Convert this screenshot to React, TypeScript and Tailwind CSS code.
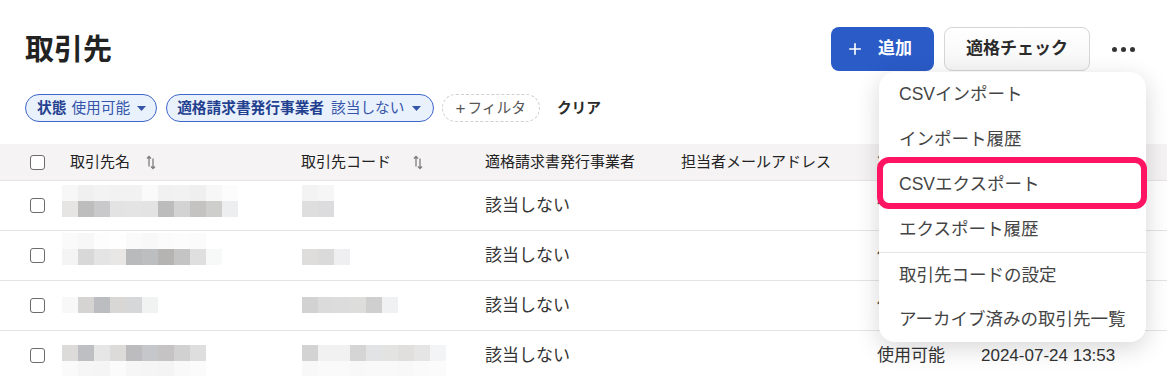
import { Plus } from 'lucide-react';

type Mosaic = { top: number; cells: string[][] };

const rows: { name: Mosaic; code: Mosaic }[] = [
  {
    name: {
      top: 4,
      cells: [
        ['#f7f7f7', '#f0f0f0', '#f3f3f3', '#f2f2f2', '#f2f2f2', '#fafafa', '#f1f1f1', '#f2f2f2', '#efefef', '#f7f7f7', '#fcfcfc'],
        ['#e6e5e4', '#bdbdbd', '#c9c9cb', '#e3e3e3', '#e4e4e4', '#e3e3e3', '#bcbcbc', '#d3d3d3', '#c4c3c2', '#cececd', '#eceef0'],
      ],
    },
    code: { top: 4, cells: [['#f3f3f3', '#f6f6f6'], ['#dedede', '#dcdcde']] },
  },
  {
    name: {
      top: 2,
      cells: [
        ['#fafafa', '#f7f7f7', '#fdfdfd', '#fefefe', '#fafafa', '#f8f8f8', '#fbfbfb', '#fcfcfc', '#fbfbfb'],
        ['#f4f4f4', '#d8d8d8', '#e4e4e4', '#e8e7e6', '#b9babc', '#bdbec0', '#b5b4b3', '#c4c4c4', '#dfdfe0', '#f7f8f8'],
      ],
    },
    code: { top: 18, cells: [['#dedddb', '#dadada', '#efeff1']] },
  },
  {
    name: { top: 16, cells: [['#f8f8f8', '#d5d4d2', '#bcbdc0', '#d8d7d6', '#d6d7d8', '#f1f2f2']] },
    code: { top: 16, cells: [['#d2d2d2', '#dbdbdb', '#dcdcdc', '#dddddc', '#cfcfcf', '#f0f1f3']] },
  },
  {
    name: {
      top: 14,
      cells: [
        ['#dcdbd9', '#bebfc2', '#e6e6e6', '#dcdbd9', '#bcbcbf', '#c6c7ca', '#c5c3c4', '#d0d1d0', '#dedede'],
        ['#fafafa', '#f6f6f6', '#f5f5f5', '#fbfbfb', '#f6f6f6', '#f5f5f5', '#f4f4f4', '#f9f9f9', '#fbfbfb'],
      ],
    },
    code: {
      top: 14,
      cells: [
        ['#d3d3d3', '#f1f1f1', '#f1f1f1', '#d5d5d5', '#e2e3e5', '#e3e3e2', '#e0dfde', '#e5e5e5', '#f3f4f6'],
        ['#f8f8f8', '#fafafa', '#fafafa', '#f8f8f8', '#f9f9f9', '#f9f9f9', '#f8f8f8', '#fafafa', '#fbfbfb'],
      ],
    },
  },
];

const menuItems = ['CSVインポート', 'インポート履歴', 'CSVエクスポート', 'エクスポート履歴'];

function Blur({ m }: { m: Mosaic }) {
  return (
    <div className="flex flex-col" style={{ marginTop: m.top }}>
      {m.cells.map((line, i) => (
        <div key={i} className="flex">
          {line.map((c, j) => (
            <div key={j} className="w-4 h-4" style={{ backgroundColor: c }} />
          ))}
        </div>
      ))}
    </div>
  );
}

function Checkbox() {
  return <div className="w-[15px] h-[15px] rounded-[3px] border-[1.5px] border-[#6b6b6b] bg-white" />;
}

function SortIcon() {
  return (
    <svg width="10" height="15" viewBox="0 0 10 15" className="text-[#7d7d7d]" fill="none" stroke="currentColor" strokeWidth="1.3">
      <path d="M3 11.5V1.5M1 3.5l2-2 2 2" />
      <path d="M7 3.5v10M5 11.5l2 2 2-2" />
    </svg>
  );
}

function Caret() {
  return (
    <svg width="9" height="5" viewBox="0 0 9 5" className="ml-[7px]">
      <path d="M0 0h9L4.5 5z" fill="#3556a8" />
    </svg>
  );
}

export default function App() {
  return (
    <div className="relative h-[376px] w-[1167px] overflow-hidden bg-white font-['Liberation_Sans','Noto_Sans_CJK_JP',sans-serif] text-[#333]">
      {/* header */}
      <div className="flex items-center justify-between pl-[25px] pr-[21px] pt-[27px]">
        <h1 className="text-[29px] font-bold text-[#222] leading-none mt-[2px]">取引先</h1>
        <div className="flex items-center">
          <button className="h-[44px] w-[103px] rounded-[8px] bg-[#2a5bc7] text-white text-[17px] font-bold flex items-center pl-[15px] gap-[14px]">
            <Plus className="w-[18px] h-[18px]" strokeWidth={2.2} />
            追加
          </button>
          <button className="ml-[10px] h-[44px] w-[146px] rounded-[8px] border border-[#d6d6d6] bg-gradient-to-b from-white to-[#f6f6f6] text-[17px] font-bold text-[#2b2b2b]">
            適格チェック
          </button>
          <div className="relative ml-[10px]">
            <button className="h-[44px] w-[46px] flex items-center justify-center gap-[4px]">
              <span className="w-[5px] h-[5px] rounded-full bg-[#333]" />
              <span className="w-[5px] h-[5px] rounded-full bg-[#333]" />
              <span className="w-[5px] h-[5px] rounded-full bg-[#333]" />
            </button>
          </div>
        </div>
      </div>

      {/* filters */}
      <div className="flex items-center pl-[25px] mt-[23px] text-[14.7px]">
        <div className="h-[28px] flex items-center rounded-full border border-[#3d66c9] bg-[#e9f1fd] pl-[11px] pr-[10px] text-[#3556a8]">
          <span className="font-bold text-[#23408f]">状態</span>
          <span className="ml-[5px]">使用可能</span>
          <Caret />
        </div>
        <div className="ml-[9px] h-[28px] flex items-center rounded-full border border-[#3d66c9] bg-[#e9f1fd] pl-[10px] pr-[12px] text-[#3556a8]">
          <span className="font-bold text-[#23408f]">適格請求書発行事業者</span>
          <span className="ml-[7px]">該当しない</span>
          <Caret />
        </div>
        <div className="ml-[8px] h-[28px] flex items-center rounded-full border border-dashed border-[#cfcfcf] px-[13px] text-[#555]">
          <span className="text-[17px] leading-none mr-[2px]">+</span>フィルタ
        </div>
        <span className="ml-[17px] font-bold text-[#2b2b2b]">クリア</span>
      </div>

      {/* table */}
      <div className="mt-[22px]">
        <div className="grid grid-cols-[62px_231px_184px_196px_196px_104px_1fr] h-[37px] items-center bg-[#f5f3f4] border-b border-[#e4e4e4] text-[15px] text-[#222]">
          <div className="pl-[30px]"><Checkbox /></div>
          <div className="pl-[8px] flex items-center gap-[16px]">取引先名<SortIcon /></div>
          <div className="pl-[8px] flex items-center gap-[22px]">取引先コード<SortIcon /></div>
          <div className="pl-[8px]">適格請求書発行事業者</div>
          <div className="pl-[8px]">担当者メールアドレス</div>
          <div className="pl-[8px]">状態</div>
          <div className="pl-[8px]">作成日時</div>
        </div>
        {rows.map((r, i) => (
          <div key={i} className="grid grid-cols-[62px_231px_184px_196px_196px_104px_1fr] h-[50px] border-b border-[#e4e4e4] text-[17px]">
            <div className="pl-[30px] flex items-center"><Checkbox /></div>
            <div><Blur m={r.name} /></div>
            <div className="pl-[9px]"><Blur m={r.code} /></div>
            <div className="pl-[8px] flex items-center">該当しない</div>
            <div />
            <div className="pl-[8px] flex items-center">使用可能</div>
            <div className="pl-[8px] flex items-center">2024-07-24 13:53</div>
          </div>
        ))}
      </div>

      {/* dropdown menu */}
      <div className="absolute left-[879px] top-[72px] w-[267px] rounded-[16px] bg-white shadow-[0_6px_24px_rgba(0,0,0,0.16)] text-[17.5px] text-[#444]">
        {menuItems.map((m) => (
          <div key={m} className="h-[45px] flex items-center px-[20px]">{m}</div>
        ))}
        <div className="border-t border-[#e6e6e6]" />
        <div className="h-[44px] flex items-center px-[20px]">取引先コードの設定</div>
        <div className="h-[45px] flex items-center px-[20px]">アーカイブ済みの取引先一覧</div>
        <div className="absolute left-[-2px] top-[85px] w-[270px] h-[52px] rounded-[12px] border-[6px] border-[#ff1464]" />
      </div>
    </div>
  );
}
